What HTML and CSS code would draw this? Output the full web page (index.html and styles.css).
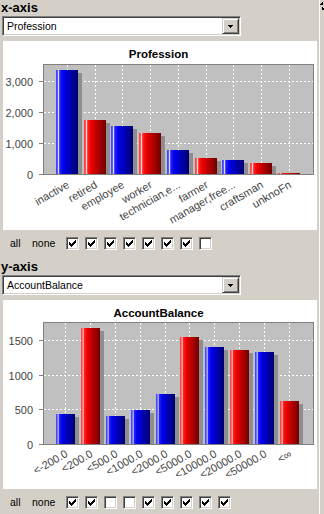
FILE: index.html
```html
<!DOCTYPE html>
<html>
<head>
<meta charset="utf-8">
<link rel="stylesheet" href="styles.css">
</head>
<body>
<div class="app">
  <div class="main">
    <section class="axis">
      <div class="axis-label">x-axis</div>
      <div class="combo"><span class="combo-text">Profession</span><span class="combo-btn"><svg width="5" height="3" viewBox="0 0 5 3"><path d="M0 0h5v1h-5zM1 1h3v1h-3zM2 2h1v1h-1z"/></svg></span></div>
      <div class="chart">
        <div class="chart-title">Profession</div>
        <svg class="plot" width="314" height="169" viewBox="0 0 314 169">
          <defs>
            <linearGradient id="gb1" x1="0" x2="1" y1="0" y2="0">
              <stop offset="0" stop-color="#3a3aff"/><stop offset="0.07" stop-color="#5a5aff"/><stop offset="0.11" stop-color="#e8e8ff"/><stop offset="0.17" stop-color="#2424ff"/><stop offset="0.32" stop-color="#0000ee"/><stop offset="0.78" stop-color="#000098"/><stop offset="1" stop-color="#000070"/>
            </linearGradient>
            <linearGradient id="gr1" x1="0" x2="1" y1="0" y2="0">
              <stop offset="0" stop-color="#ff3a3a"/><stop offset="0.07" stop-color="#ff5a5a"/><stop offset="0.11" stop-color="#ffe0e0"/><stop offset="0.17" stop-color="#ff2424"/><stop offset="0.32" stop-color="#ee0000"/><stop offset="0.78" stop-color="#980000"/><stop offset="1" stop-color="#700000"/>
            </linearGradient>
          </defs>
          <rect class="plot-bg" x="40" y="3" width="271" height="111"/>
          <path class="grid" d="M41 82.5H310M41 51.5H310M41 20.5H310"/>
          <path class="grid" d="M64.5 4V113M92.5 4V113M119.5 4V113M147.5 4V113M175.5 4V113M203.5 4V113M230.5 4V113M258.5 4V113M286.5 4V113"/>
          <g class="shadow">
            <rect x="57" y="12" width="22" height="101"/>
            <rect x="85" y="62" width="22" height="51"/>
            <rect x="112" y="68" width="22" height="45"/>
            <rect x="140" y="75" width="22" height="38"/>
            <rect x="168" y="92" width="22" height="21"/>
            <rect x="196" y="100" width="22" height="13"/>
            <rect x="223" y="102" width="22" height="11"/>
            <rect x="251" y="105" width="22" height="8"/>
          </g>
          <rect x="53" y="9" width="22" height="104" fill="url(#gb1)"/>
          <rect x="81" y="59" width="22" height="54" fill="url(#gr1)"/>
          <rect x="108" y="65" width="22" height="48" fill="url(#gb1)"/>
          <rect x="136" y="72" width="22" height="41" fill="url(#gr1)"/>
          <rect x="164" y="89" width="22" height="24" fill="url(#gb1)"/>
          <rect x="192" y="97" width="22" height="16" fill="url(#gr1)"/>
          <rect x="219" y="99" width="22" height="14" fill="url(#gb1)"/>
          <rect x="247" y="102" width="22" height="11" fill="url(#gr1)"/>
          <rect x="275" y="112" width="22" height="1" fill="url(#gr1)"/>
          <rect class="plot-border" x="40.5" y="3.5" width="270" height="110"/>
          <path class="tick" d="M36 113.5H40M36 82.5H40M36 51.5H40M36 20.5H40"/>
          <g class="tick-label">
            <text x="30" y="117.5">0</text>
            <text x="30" y="86.5">1,000</text>
            <text x="30" y="55.5">2,000</text>
            <text x="30" y="24.5">3,000</text>
          </g>
          <g class="cat-label">
            <text x="67" y="126" transform="rotate(-30 67 126)">inactive</text>
            <text x="95" y="126" transform="rotate(-30 95 126)">retired</text>
            <text x="122" y="126" transform="rotate(-30 122 126)">employee</text>
            <text x="150" y="126" transform="rotate(-30 150 126)">worker</text>
            <text x="178" y="126" transform="rotate(-30 178 126)">technician,e...</text>
            <text x="206" y="126" transform="rotate(-30 206 126)">farmer</text>
            <text x="233" y="126" transform="rotate(-30 233 126)">manager,free...</text>
            <text x="261" y="126" transform="rotate(-30 261 126)">craftsman</text>
            <text x="289" y="126" transform="rotate(-30 289 126)">unknoFn</text>
          </g>
        </svg>
      </div>
      <div class="filters">
        <span class="link link-all">all</span><span class="link link-none">none</span>
        <span class="cb"><svg width="11" height="11" viewBox="1 1 11 11"><path d="M9 3h1v1h-1zM8 4h2v1h-2zM3 5h1v1h-1zM7 5h3v1h-3zM3 6h2v1h-2zM6 6h3v1h-3zM3 7h5v1h-5zM4 8h3v1h-3zM5 9h1v1h-1z"/></svg></span>
        <span class="cb"><svg width="11" height="11" viewBox="1 1 11 11"><path d="M9 3h1v1h-1zM8 4h2v1h-2zM3 5h1v1h-1zM7 5h3v1h-3zM3 6h2v1h-2zM6 6h3v1h-3zM3 7h5v1h-5zM4 8h3v1h-3zM5 9h1v1h-1z"/></svg></span>
        <span class="cb"><svg width="11" height="11" viewBox="1 1 11 11"><path d="M9 3h1v1h-1zM8 4h2v1h-2zM3 5h1v1h-1zM7 5h3v1h-3zM3 6h2v1h-2zM6 6h3v1h-3zM3 7h5v1h-5zM4 8h3v1h-3zM5 9h1v1h-1z"/></svg></span>
        <span class="cb"><svg width="11" height="11" viewBox="1 1 11 11"><path d="M9 3h1v1h-1zM8 4h2v1h-2zM3 5h1v1h-1zM7 5h3v1h-3zM3 6h2v1h-2zM6 6h3v1h-3zM3 7h5v1h-5zM4 8h3v1h-3zM5 9h1v1h-1z"/></svg></span>
        <span class="cb"><svg width="11" height="11" viewBox="1 1 11 11"><path d="M9 3h1v1h-1zM8 4h2v1h-2zM3 5h1v1h-1zM7 5h3v1h-3zM3 6h2v1h-2zM6 6h3v1h-3zM3 7h5v1h-5zM4 8h3v1h-3zM5 9h1v1h-1z"/></svg></span>
        <span class="cb"><svg width="11" height="11" viewBox="1 1 11 11"><path d="M9 3h1v1h-1zM8 4h2v1h-2zM3 5h1v1h-1zM7 5h3v1h-3zM3 6h2v1h-2zM6 6h3v1h-3zM3 7h5v1h-5zM4 8h3v1h-3zM5 9h1v1h-1z"/></svg></span>
        <span class="cb"><svg width="11" height="11" viewBox="1 1 11 11"><path d="M9 3h1v1h-1zM8 4h2v1h-2zM3 5h1v1h-1zM7 5h3v1h-3zM3 6h2v1h-2zM6 6h3v1h-3zM3 7h5v1h-5zM4 8h3v1h-3zM5 9h1v1h-1z"/></svg></span>
        <span class="cb"></span>
      </div>
    </section>
    <section class="axis">
      <div class="axis-label">y-axis</div>
      <div class="combo"><span class="combo-text">AccountBalance</span><span class="combo-btn"><svg width="5" height="3" viewBox="0 0 5 3"><path d="M0 0h5v1h-5zM1 1h3v1h-3zM2 2h1v1h-1z"/></svg></span></div>
      <div class="chart">
        <div class="chart-title">AccountBalance</div>
        <svg class="plot" width="314" height="169" viewBox="0 0 314 169">
          <defs>
            <linearGradient id="gb2" x1="0" x2="1" y1="0" y2="0">
              <stop offset="0" stop-color="#3a3aff"/><stop offset="0.07" stop-color="#5a5aff"/><stop offset="0.11" stop-color="#e8e8ff"/><stop offset="0.17" stop-color="#2424ff"/><stop offset="0.32" stop-color="#0000ee"/><stop offset="0.78" stop-color="#000098"/><stop offset="1" stop-color="#000070"/>
            </linearGradient>
            <linearGradient id="gr2" x1="0" x2="1" y1="0" y2="0">
              <stop offset="0" stop-color="#ff3a3a"/><stop offset="0.07" stop-color="#ff5a5a"/><stop offset="0.11" stop-color="#ffe0e0"/><stop offset="0.17" stop-color="#ff2424"/><stop offset="0.32" stop-color="#ee0000"/><stop offset="0.78" stop-color="#980000"/><stop offset="1" stop-color="#700000"/>
            </linearGradient>
          </defs>
          <rect class="plot-bg" x="40" y="2" width="271" height="123"/>
          <path class="grid" d="M41 89.5H310M41 55.5H310M41 20.5H310"/>
          <path class="grid" d="M62.5 3V124M87.5 3V124M112.5 3V124M137.5 3V124M162.5 3V124M186.5 3V124M211.5 3V124M236.5 3V124M261.5 3V124M286.5 3V124"/>
          <g class="shadow">
            <rect x="57" y="97" width="19" height="27"/>
            <rect x="82" y="11" width="19" height="113"/>
            <rect x="107" y="99" width="19" height="25"/>
            <rect x="132" y="93" width="19" height="31"/>
            <rect x="157" y="77" width="19" height="47"/>
            <rect x="181" y="20" width="19" height="104"/>
            <rect x="206" y="30" width="19" height="94"/>
            <rect x="231" y="33" width="19" height="91"/>
            <rect x="256" y="35" width="19" height="89"/>
            <rect x="281" y="84" width="19" height="40"/>
          </g>
          <rect x="53" y="94" width="19" height="30" fill="url(#gb2)"/>
          <rect x="78" y="8" width="19" height="116" fill="url(#gr2)"/>
          <rect x="103" y="96" width="19" height="28" fill="url(#gb2)"/>
          <rect x="128" y="90" width="19" height="34" fill="url(#gb2)"/>
          <rect x="153" y="74" width="19" height="50" fill="url(#gb2)"/>
          <rect x="177" y="17" width="19" height="107" fill="url(#gr2)"/>
          <rect x="202" y="27" width="19" height="97" fill="url(#gb2)"/>
          <rect x="227" y="30" width="19" height="94" fill="url(#gr2)"/>
          <rect x="252" y="32" width="19" height="92" fill="url(#gb2)"/>
          <rect x="277" y="81" width="19" height="43" fill="url(#gr2)"/>
          <rect class="plot-border" x="40.5" y="2.5" width="270" height="122"/>
          <path class="tick" d="M36 124.5H40M36 89.5H40M36 55.5H40M36 20.5H40"/>
          <g class="tick-label">
            <text x="30" y="128.5">0</text>
            <text x="30" y="93.5">500</text>
            <text x="30" y="59.5">1000</text>
            <text x="30" y="24.5">1500</text>
          </g>
          <g class="cat-label">
            <text x="65.5" y="136" transform="rotate(-30 65.5 136)">&lt;-200.0</text>
            <text x="90.5" y="136" transform="rotate(-30 90.5 136)">&lt;200.0</text>
            <text x="115.5" y="136" transform="rotate(-30 115.5 136)">&lt;500.0</text>
            <text x="140.5" y="136" transform="rotate(-30 140.5 136)">&lt;1000.0</text>
            <text x="165.5" y="136" transform="rotate(-30 165.5 136)">&lt;2000.0</text>
            <text x="189.5" y="136" transform="rotate(-30 189.5 136)">&lt;5000.0</text>
            <text x="214.5" y="136" transform="rotate(-30 214.5 136)">&lt;10000.0</text>
            <text x="239.5" y="136" transform="rotate(-30 239.5 136)">&lt;20000.0</text>
            <text x="264.5" y="136" transform="rotate(-30 264.5 136)">&lt;50000.0</text>
            <text x="289.5" y="136" transform="rotate(-30 289.5 136)">&lt;∞</text>
          </g>
        </svg>
      </div>
      <div class="filters">
        <span class="link link-all">all</span><span class="link link-none">none</span>
        <span class="cb"><svg width="11" height="11" viewBox="1 1 11 11"><path d="M9 3h1v1h-1zM8 4h2v1h-2zM3 5h1v1h-1zM7 5h3v1h-3zM3 6h2v1h-2zM6 6h3v1h-3zM3 7h5v1h-5zM4 8h3v1h-3zM5 9h1v1h-1z"/></svg></span>
        <span class="cb"><svg width="11" height="11" viewBox="1 1 11 11"><path d="M9 3h1v1h-1zM8 4h2v1h-2zM3 5h1v1h-1zM7 5h3v1h-3zM3 6h2v1h-2zM6 6h3v1h-3zM3 7h5v1h-5zM4 8h3v1h-3zM5 9h1v1h-1z"/></svg></span>
        <span class="cb"></span>
        <span class="cb"></span>
        <span class="cb"><svg width="11" height="11" viewBox="1 1 11 11"><path d="M9 3h1v1h-1zM8 4h2v1h-2zM3 5h1v1h-1zM7 5h3v1h-3zM3 6h2v1h-2zM6 6h3v1h-3zM3 7h5v1h-5zM4 8h3v1h-3zM5 9h1v1h-1z"/></svg></span>
        <span class="cb"><svg width="11" height="11" viewBox="1 1 11 11"><path d="M9 3h1v1h-1zM8 4h2v1h-2zM3 5h1v1h-1zM7 5h3v1h-3zM3 6h2v1h-2zM6 6h3v1h-3zM3 7h5v1h-5zM4 8h3v1h-3zM5 9h1v1h-1z"/></svg></span>
        <span class="cb"><svg width="11" height="11" viewBox="1 1 11 11"><path d="M9 3h1v1h-1zM8 4h2v1h-2zM3 5h1v1h-1zM7 5h3v1h-3zM3 6h2v1h-2zM6 6h3v1h-3zM3 7h5v1h-5zM4 8h3v1h-3zM5 9h1v1h-1z"/></svg></span>
        <span class="cb"><svg width="11" height="11" viewBox="1 1 11 11"><path d="M9 3h1v1h-1zM8 4h2v1h-2zM3 5h1v1h-1zM7 5h3v1h-3zM3 6h2v1h-2zM6 6h3v1h-3zM3 7h5v1h-5zM4 8h3v1h-3zM5 9h1v1h-1z"/></svg></span>
        <span class="cb"><svg width="11" height="11" viewBox="1 1 11 11"><path d="M9 3h1v1h-1zM8 4h2v1h-2zM3 5h1v1h-1zM7 5h3v1h-3zM3 6h2v1h-2zM6 6h3v1h-3zM3 7h5v1h-5zM4 8h3v1h-3zM5 9h1v1h-1z"/></svg></span>
      </div>
    </section>
  </div>
  <div class="divider">
    <svg class="onetouch" width="6" height="10" viewBox="0 0 6 10"><path d="M2 0h1v1h-1zM1 1h2v1h-2zM0 2h3v1h-3zM2 5h1v1h-1zM2 6h2v1h-2zM2 7h3v1h-3z"/></svg>
  </div>
</div>
</body>
</html>
```
FILE: styles.css
```css
html, body {
  margin: 0;
  padding: 0;
}
body {
  background: #d4d0c8;
  width: 324px;
  height: 514px;
  overflow: hidden;
  font-family: "Liberation Sans", Arial, sans-serif;
  font-size: 10.5px;
  color: #000;
}
.app {
  display: flex;
  height: 514px;
}
.main {
  width: 318px;
  flex: 0 0 318px;
}
.axis-label {
  font-weight: bold;
  font-size: 13px;
  line-height: 16px;
  height: 16px;
  padding-left: 1px;
}
.combo {
  margin-left: 2px;
  width: 239px;
  height: 20px;
  box-sizing: border-box;
  border: 1px solid;
  border-color: #808080 #fff #fff #808080;
  box-shadow: inset 1px 1px #404040, inset -1px -1px #d4d0c8;
  background: #fff;
  padding: 1px;
  display: flex;
}
.combo-text {
  flex: 1;
  padding-left: 3px;
  line-height: 16px;
  white-space: nowrap;
}
.combo-btn {
  width: 17px;
  height: 16px;
  box-sizing: border-box;
  background: #d4d0c8;
  border: 1px solid;
  border-color: #d4d0c8 #404040 #404040 #d4d0c8;
  box-shadow: inset 1px 1px #fff, inset -1px -1px #808080;
  display: flex;
  align-items: center;
  justify-content: center;
}
.combo-btn svg {
  display: block;
  fill: #000;
}
.chart {
  margin: 5px 0 0 3px;
  width: 314px;
  height: 189px;
  background: #fff;
  overflow: hidden;
}
.chart-title {
  height: 20px;
  box-sizing: border-box;
  padding-top: 7px;
  line-height: 13px;
  text-align: center;
  font-weight: bold;
  font-size: 11.5px;
  padding-right: 3px;
}
.plot {
  display: block;
}
.plot-bg {
  fill: #c0c0c0;
}
.plot-border {
  fill: none;
  stroke: #808080;
  stroke-width: 1;
}
.grid {
  fill: none;
  stroke: #ffffff;
  stroke-width: 1;
  stroke-dasharray: 2 2;
}
.shadow {
  fill: #8e8e8e;
}
.tick {
  stroke: #808080;
  stroke-width: 1;
}
.tick-label text {
  font-family: "Liberation Sans", Arial, sans-serif;
  font-size: 11px;
  fill: #444;
  text-anchor: end;
}
.cat-label text {
  font-family: "Liberation Sans", Arial, sans-serif;
  font-size: 11px;
  fill: #444;
  text-anchor: end;
}
.filters {
  display: flex;
  align-items: center;
  height: 29px;
  box-sizing: border-box;
  padding-top: 7px;
  padding-bottom: 9px;
}
.link {
  display: inline-block;
  line-height: 13px;
  color: #000;
}
.link-all {
  width: 22px;
  padding-left: 10px;
}
.link-none {
  width: 34px;
}
.cb {
  width: 13px;
  height: 13px;
  flex: 0 0 13px;
  box-sizing: border-box;
  border: 1px solid;
  border-color: #808080 #fff #fff #808080;
  box-shadow: inset 1px 1px #404040, inset -1px -1px #d4d0c8;
  background: #fff;
  margin-right: 6px;
}
.cb svg {
  display: block;
  fill: #000;
}
.divider {
  flex: 0 0 6px;
  position: relative;
  border-left: 1px solid #fff;
  margin-left: 1px;
}
.onetouch {
  position: absolute;
  left: 0;
  top: 2px;
  fill: #000;
}
```
